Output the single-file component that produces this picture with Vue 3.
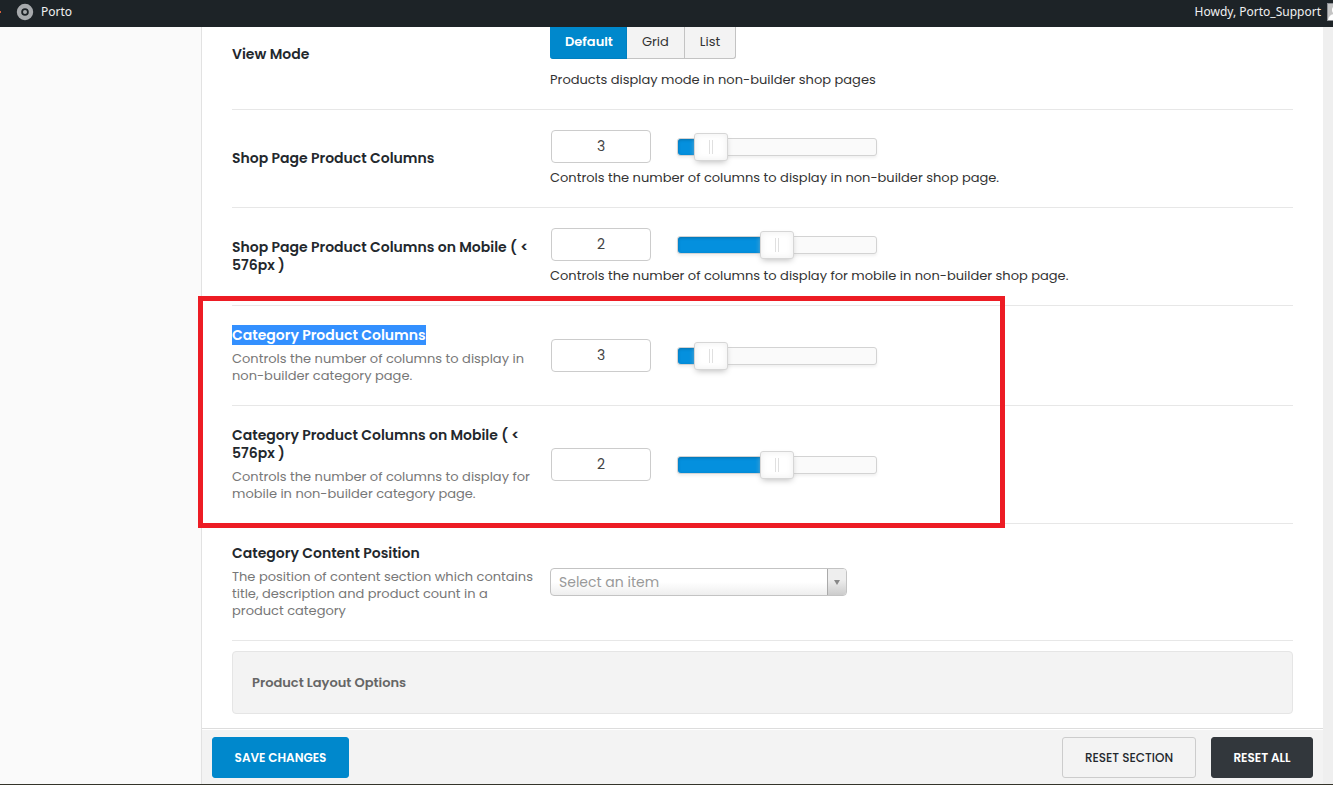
<script setup>
import { ref, reactive } from 'vue'

const modes = ['Default', 'Grid', 'List']
const mode = ref('Default')
const position = ref('')

const shopFields = reactive([
  {
    id: 'shop-columns',
    title: 'Shop Page Product Columns',
    hint: 'Controls the number of columns to display in non-builder shop page.',
    value: 3, min: 2, max: 8
  },
  {
    id: 'shop-columns-mobile',
    title: 'Shop Page Product Columns on Mobile ( < 576px )',
    hint: 'Controls the number of columns to display for mobile in non-builder shop page.',
    value: 2, min: 1, max: 3
  }
])

const categoryFields = reactive([
  {
    id: 'category-columns',
    title: 'Category Product Columns',
    selected: true,
    desc: 'Controls the number of columns to display in non-builder category page.',
    value: 3, min: 2, max: 8
  },
  {
    id: 'category-columns-mobile',
    title: 'Category Product Columns on Mobile ( < 576px )',
    desc: 'Controls the number of columns to display for mobile in non-builder category page.',
    value: 2, min: 1, max: 3
  }
])

const fill = (f) => ({ width: ((f.value - f.min) / (f.max - f.min)) * 100 + '%' })
</script>

<template>
  <div class="page">
    <header class="adminbar">
      <span class="sliver"></span>
      <a href="#" class="site">
        <svg width="18" height="18" viewBox="0 0 18 18" aria-hidden="true">
          <circle cx="9" cy="9" r="6" fill="none" stroke="#a7aaad" stroke-width="4.4" />
          <circle cx="9" cy="9" r="2" fill="#a7aaad" />
        </svg>
        <span>Porto</span>
      </a>
      <a href="#" class="account">
        <span>Howdy, Porto_Support</span>
        <span class="avatar">
          <svg width="18" height="18" viewBox="0 0 18 18" aria-hidden="true">
            <rect x="0.5" y="0.5" width="17" height="17" fill="#c4c4c4" stroke="#8c8f94" />
            <circle cx="9" cy="7" r="4" fill="#fff" />
            <path d="M1 17 C2 12 5 11 9 11 C13 11 16 12 17 17 Z" fill="#fff" />
          </svg>
        </span>
      </a>
    </header>

    <div class="body">
      <aside class="side"></aside>

      <form class="panel" @submit.prevent>
        <main class="fields">
          <section class="row first">
            <div class="label"><h3>View Mode</h3></div>
            <div class="control">
              <div class="group" role="group" aria-label="View Mode">
                <button
                  v-for="m in modes" :key="m" type="button"
                  :class="{ on: mode === m }" :aria-pressed="mode === m" @click="mode = m"
                >{{ m }}</button>
              </div>
              <p class="hint wide">Products display mode in non-builder shop pages</p>
            </div>
          </section>

          <section v-for="f in shopFields" :key="f.id" class="row">
            <div class="label"><label class="title" :for="f.id">{{ f.title }}</label></div>
            <div class="control">
              <div class="spin">
                <input :id="f.id" v-model.number="f.value" class="num" type="text">
                <div class="slider">
                  <span class="fill" :style="fill(f)"></span>
                  <input v-model.number="f.value" type="range" :min="f.min" :max="f.max" :aria-label="f.title">
                </div>
              </div>
              <p class="hint">{{ f.hint }}</p>
            </div>
          </section>

          <div class="marked">
            <section v-for="f in categoryFields" :key="f.id" class="row">
              <div class="label">
                <label class="title" :for="f.id"><span :class="{ selected: f.selected }">{{ f.title }}</span></label>
                <p class="desc">{{ f.desc }}</p>
              </div>
              <div class="control">
                <div class="spin">
                  <input :id="f.id" v-model.number="f.value" class="num" type="text">
                  <div class="slider">
                    <span class="fill" :style="fill(f)"></span>
                    <input v-model.number="f.value" type="range" :min="f.min" :max="f.max" :aria-label="f.title">
                  </div>
                </div>
              </div>
            </section>
            <div class="frame"></div>
          </div>

          <section class="row">
            <div class="label">
              <label class="title" for="content-position">Category Content Position</label>
              <p class="desc">The position of content section which contains title, description and product count in a product category</p>
            </div>
            <div class="control">
              <div class="picker">
                <select id="content-position" v-model="position">
                  <option value="">Select an item</option>
                  <option value="before">Before products</option>
                  <option value="after">After products</option>
                </select>
                <span class="arrow">
                  <svg width="8" height="7" viewBox="0 0 8 7" aria-hidden="true"><path d="M1 1 H7 L4 6 Z" fill="#888" /></svg>
                </span>
              </div>
            </div>
          </section>

          <h3 class="section">Product Layout Options</h3>
        </main>

        <footer class="actions">
          <button type="submit" class="btn save">SAVE CHANGES</button>
          <div class="resets">
            <button type="button" class="btn reset">RESET SECTION</button>
            <button type="button" class="btn all">RESET ALL</button>
          </div>
        </footer>
      </form>
    </div>
  </div>
</template>

<style>
body {
  margin: 0;
  background: #f0f0f1;
}
</style>

<style scoped>
* {
  box-sizing: border-box;
}
.page {
  display: flex;
  flex-direction: column;
  min-height: 100vh;
  overflow: hidden;
  border-bottom: 1px solid #34342a;
  background: #efefef;
  color: #333;
  font-family: Poppins, Inter, sans-serif;
  font-size: 13px;
}
.adminbar {
  display: flex;
  align-items: center;
  height: 27px;
  padding-bottom: 4px;
  background: #1d2327;
  font-family: "Noto Sans", sans-serif;
  font-size: 12px;
  overflow: hidden;
}
.adminbar a {
  display: flex;
  align-items: center;
  color: #f0f0f1;
  text-decoration: none;
}
.sliver {
  width: 1px;
  height: 2px;
  background: #d9603b;
}
.site {
  gap: 7px;
  margin-left: 15px;
}
.account {
  gap: 6px;
  margin-left: auto;
}
.avatar {
  display: flex;
  width: 6px;
  overflow: hidden;
}
.avatar svg {
  flex: none;
}
.body {
  display: flex;
  flex: 1;
}
.side {
  width: 202px;
  flex: none;
  border-right: 1px solid #e2e2e2;
  background: #fafafa;
}
.panel {
  display: flex;
  flex: 1;
  flex-direction: column;
  margin-right: 10px;
  background: #fff;
}
.fields {
  padding: 0 30px 14px;
}
.row {
  display: grid;
  grid-template-columns: 303px 1fr;
  column-gap: 15px;
  align-items: center;
  border-bottom: 1px solid #e7e7e7;
}
.label {
  padding: 20px 0 21px;
}
.control {
  padding: 20px 0;
}
.first .label {
  padding: 0 0 28px;
}
.first .control {
  padding: 0 0 20px;
}
h3,
.title {
  display: block;
  margin: 0;
  color: #23282d;
  font-size: 14px;
  font-weight: 600;
  line-height: 18px;
}
p {
  margin: 0;
}
.selected {
  background: #3390ff;
  color: #fff;
}
.desc {
  margin-top: 6px;
  color: #777;
  line-height: 17px;
}
.hint {
  margin-top: 6px;
  line-height: 18px;
}
.hint.wide {
  margin-top: 12px;
}
.group {
  display: flex;
}
.group button {
  height: 32px;
  padding: 0 15px 2px;
  border: 1px solid #c3c3c3;
  border-top: 0;
  border-left: 0;
  background: #f3f3f3;
  color: #333;
  font: inherit;
}
.group button:first-child {
  padding-right: 13px;
  border-radius: 0 0 0 3px;
}
.group button:last-child {
  border-radius: 0 0 3px 0;
}
.group button.on {
  border-color: #0080c0;
  background: #0088cc;
  color: #fff;
  font-weight: 600;
}
.spin {
  display: flex;
  align-items: center;
  gap: 26px;
  padding-left: 1px;
}
.num {
  width: 100px;
  height: 33px;
  padding: 0;
  border: 1px solid #ccc;
  border-radius: 4px;
  background: #fff;
  color: #444;
  font: inherit;
  font-size: 14px;
  text-align: center;
}
.slider {
  position: relative;
  display: flex;
  align-items: center;
  width: 200px;
  height: 18px;
  border: 1px solid #d3d3d3;
  border-radius: 3px;
  background: #fafafa;
  box-shadow: 0 2px 3px #f0f0f0;
}
.fill {
  position: absolute;
  top: 0;
  bottom: 0;
  left: 0;
  border-radius: 3px 0 0 3px;
  background: #0490de;
  box-shadow: inset 0 1px 3px #0671ad;
}
.slider input {
  position: relative;
  flex: none;
  width: calc(100% + 34px);
  height: 28px;
  margin: 0 -17px;
  background: transparent;
  appearance: none;
}
.slider input::-webkit-slider-thumb {
  width: 34px;
  height: 28px;
  border: 1px solid #d6d6d6;
  border-radius: 3px;
  background:
    linear-gradient(#e0e0e0, #e0e0e0) 14px 6px / 1px 14px no-repeat,
    linear-gradient(#e0e0e0, #e0e0e0) 17px 6px / 1px 14px no-repeat,
    #fff;
  box-shadow: inset 0 0 7px #eee, 0 3px 6px -2px #bbb;
  appearance: none;
}
.picker {
  position: relative;
  width: 297px;
}
.picker select {
  display: block;
  width: 100%;
  height: 28px;
  padding: 0 28px 0 8px;
  border: 1px solid #c3c3c3;
  border-radius: 4px;
  background: linear-gradient(#fff 50%, #eee);
  color: #999;
  font: inherit;
  font-size: 14px;
  appearance: none;
}
.arrow {
  position: absolute;
  top: 1px;
  right: 1px;
  bottom: 1px;
  display: flex;
  align-items: center;
  justify-content: center;
  width: 19px;
  border-left: 1px solid #aaa;
  border-radius: 0 3px 3px 0;
  background: linear-gradient(#eee 40%, #ccc);
  pointer-events: none;
}
.marked {
  position: relative;
}
.frame {
  position: absolute;
  top: -10px;
  bottom: -4px;
  left: -34px;
  width: 807px;
  border: 5px solid #ed1c24;
  pointer-events: none;
}
.section {
  margin-top: 10px;
  padding: 22px 19px 21px;
  border: 1px solid #e5e5e5;
  border-radius: 4px;
  background: #f3f3f3;
  color: #666;
  font-size: 13px;
}
.actions {
  display: flex;
  align-items: center;
  justify-content: space-between;
  flex: 1;
  padding: 7px 10px 6px;
  border-top: 1px solid #ddd;
  background: #f3f3f3;
  box-shadow: inset 0 1px 0 #fff;
}
.resets {
  display: flex;
  gap: 15px;
}
.btn {
  min-width: 102px;
  height: 41px;
  padding: 1px 18px 0;
  border: 1px solid #0088cc;
  border-radius: 3px;
  background: #0088cc;
  color: #fff;
  font: inherit;
  font-size: 12px;
  font-weight: 600;
}
.save {
  min-width: 137px;
}
.reset {
  min-width: 134px;
  border-color: #ccc;
  background: #f3f3f3;
  color: #23282d;
  font-weight: 500;
}
.all {
  border-color: #32373c;
  background: #32373c;
}
</style>
